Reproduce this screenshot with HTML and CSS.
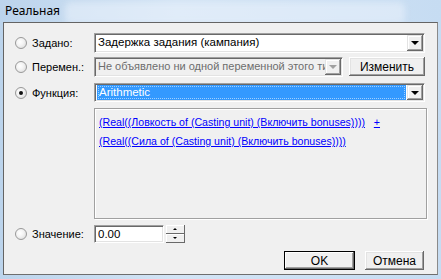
FILE: index.html
```html
<!DOCTYPE html>
<html lang="ru">
<head>
    <meta charset="UTF-8">
    <title>Реальная</title>
    <link rel="stylesheet" href="styles.css">
</head>
<body>
    <div class="window">
        <div class="titlebar">
            <span class="title">Реальная</span>
            <span class="glass"></span>
        </div>
        <div class="client">
            <div class="row row-given">
                <label class="opt"><span class="radio"></span>Задано:</label>
                <div class="combo">
                    <span class="combo-text">Задержка задания (кампания)</span>
                    <span class="drop"></span>
                </div>
            </div>

            <div class="row row-var">
                <label class="opt"><span class="radio"></span>Перемен.:</label>
                <div class="combo combo-off">
                    <span class="combo-text">Не объявлено ни одной переменной этого ти</span>
                    <span class="drop drop-off"></span>
                </div>
                <button type="button" class="btn btn-edit">Изменить</button>
            </div>

            <div class="row row-func">
                <label class="opt"><span class="radio checked"></span>Функция:</label>
                <div class="combo combo-sel">
                    <span class="combo-text"><span class="focus">Arithmetic</span></span>
                    <span class="drop"></span>
                </div>
            </div>

            <div class="func-box">
                <a class="link">(Real((Ловкость of (Casting unit) (Включить bonuses))))</a>
                <span class="op">&nbsp; <a class="link">+</a></span><br>
                <a class="link">(Real((Сила of (Casting unit) (Включить bonuses))))</a>
            </div>

            <div class="row row-value">
                <label class="opt"><span class="radio"></span>Значение:</label>
                <div class="spin-input">0.00</div>
                <div class="spin">
                    <span class="spin-btn"><span class="up"></span></span>
                    <span class="spin-btn"><span class="down"></span></span>
                </div>
            </div>

            <div class="actions">
                <button type="button" class="btn btn-ok">OK</button>
                <button type="button" class="btn btn-cancel">Отмена</button>
            </div>
        </div>
    </div>
</body>
</html>
```

FILE: styles.css
```css
* {
    box-sizing: border-box;
}

body {
    margin: 0;
    font-family: 'Liberation Sans', Arial, sans-serif;
    font-size: 11px;
    color: #000;
    background: #c9ddf1;
}

.window {
    width: 441px;
    height: 279px;
    padding: 0 3px 4px 3px;
    display: flex;
    flex-direction: column;
    background: linear-gradient(90deg, #bcd4ec 0%, #d3e4f5 40%, #c6dcf2 100%);
}

.titlebar {
    height: 22px;
    position: relative;
    flex: none;
}

.title {
    display: block;
    padding: 3px 0 0 2px;
    font-family: 'Noto Sans', 'Open Sans', sans-serif;
    font-size: 12px;
    line-height: 16px;
    color: #000;
}

.glass {
    position: absolute;
    left: 62px;
    top: 2px;
    width: 340px;
    height: 22px;
    border-radius: 6px;
    background: rgba(235, 243, 252, 0.55);
    filter: blur(3px);
}

.client {
    flex: 1;
    background: #f0f0f0;
    border: 1px solid #646464;
    border-right-color: #8a8a8a;
    border-bottom-color: #6e6e6e;
    padding: 10px 0 0 11px;
    position: relative;
}

.row {
    display: flex;
    align-items: center;
}

.row-given {
    height: 20px;
}

.row-var {
    height: 20px;
    margin-top: 4px;
}

.row-func {
    height: 19px;
    margin-top: 6px;
}

.row-value {
    height: 18px;
    margin-top: 6px;
}

.opt {
    width: 79px;
    flex: none;
    display: flex;
    align-items: center;
    white-space: nowrap;
}

.radio {
    width: 12px;
    height: 12px;
    margin-right: 5px;
    border: 1px solid #999;
    border-radius: 50%;
    background: radial-gradient(circle at 40% 40%, #ffffff 0%, #f4f4f4 40%, #d6d6d6 100%);
    position: relative;
}

.radio.checked::after {
    content: "";
    position: absolute;
    left: 3px;
    top: 3px;
    width: 4px;
    height: 4px;
    border-radius: 50%;
    background: #111;
}

.combo {
    width: 331px;
    height: 100%;
    display: flex;
    align-items: stretch;
    background: #fff;
    border: 1px solid;
    border-color: #a0a0a0 #fff #fff #a0a0a0;
    box-shadow: inset 1px 1px 0 #696969, inset -1px -1px 0 #e3e3e3;
    padding: 1px 1px 1px 2px;
}

.combo-text {
    flex: 1;
    overflow: hidden;
    white-space: nowrap;
    font-size: 11.5px;
    line-height: 15px;
    padding-left: 1px;
}

.drop {
    width: 16px;
    flex: none;
    background: #f0f0f0;
    box-shadow: inset -1px -1px 0 #696969, inset 1px 1px 0 #e3e3e3, inset -2px -2px 0 #a0a0a0, inset 2px 2px 0 #fff;
    position: relative;
}

.drop::after {
    content: "";
    position: absolute;
    left: 4px;
    top: 6px;
    border-left: 4px solid transparent;
    border-right: 4px solid transparent;
    border-top: 4px solid #000;
}

.drop-off::after {
    border-top-color: #a0a0a0;
}

.combo-off {
    width: 249px;
    background: #f0f0f0;
    color: #6d6d6d;
}

.combo-off .combo-text {
    font-size: 11px;
}

.combo-sel .combo-text {
    background: #3399ff;
    color: #fff;
    padding: 1px;
    margin-right: 1px;
}

.focus {
    display: block;
    outline: 1px dotted #9fd0ff;
    outline-offset: -1px;
    line-height: 13px;
    padding-left: 1px;
}

.btn {
    font-family: 'Liberation Sans', Arial, sans-serif;
    font-size: 11px;
    color: #000;
    background: #f0f0f0;
    border: none;
    padding: 0;
    box-shadow: inset -1px -1px 0 #696969, inset 1px 1px 0 #fff, inset -2px -2px 0 #a0a0a0, inset 2px 2px 0 #e3e3e3;
}

.btn-edit {
    width: 76px;
    height: 19px;
    margin-left: 6px;
    align-self: flex-start;
    font-size: 12px;
}

.func-box {
    width: 333px;
    height: 111px;
    margin: 6px 0 0 79px;
    border: 1px solid #a0a0a0;
    box-shadow: inset 1px 1px 0 #fff, 1px 1px 0 #fff;
    padding: 4px 0 0 4px;
    line-height: 19px;
    font-size: 10.6px;
}

.link {
    color: #0000ff;
    text-decoration: underline;
    white-space: nowrap;
}

.spin-input {
    width: 70px;
    height: 18px;
    background: #fff;
    border: 1px solid;
    border-color: #a0a0a0 #fff #fff #a0a0a0;
    box-shadow: inset 1px 1px 0 #696969, inset -1px -1px 0 #e3e3e3;
    padding: 1px 3px;
    font-size: 11.5px;
    line-height: 15px;
}

.spin {
    width: 19px;
    height: 18px;
    margin-left: 2px;
    display: flex;
    flex-direction: column;
}

.spin-btn {
    flex: 1;
    background: #f0f0f0;
    box-shadow: inset -1px -1px 0 #696969, inset 1px 1px 0 #fff, inset 0 0 0 1px #c8c8c8;
    position: relative;
}

.up, .down {
    position: absolute;
    left: 7px;
    top: 3px;
    border-left: 2px solid transparent;
    border-right: 2px solid transparent;
}

.up {
    border-bottom: 2px solid #000;
}

.down {
    border-top: 2px solid #000;
}

.actions {
    display: flex;
    justify-content: flex-end;
    gap: 10px;
    margin: 8px 13px 0 0;
}

.btn-ok {
    width: 71px;
    height: 19px;
    outline: 1px solid #000;
    outline-offset: -1px;
    box-shadow: inset -2px -2px 0 #696969, inset 2px 2px 0 #fff, inset -3px -3px 0 #a0a0a0;
    font-size: 12px;
}

.btn-cancel {
    width: 59px;
    height: 19px;
    font-size: 12px;
}
```
